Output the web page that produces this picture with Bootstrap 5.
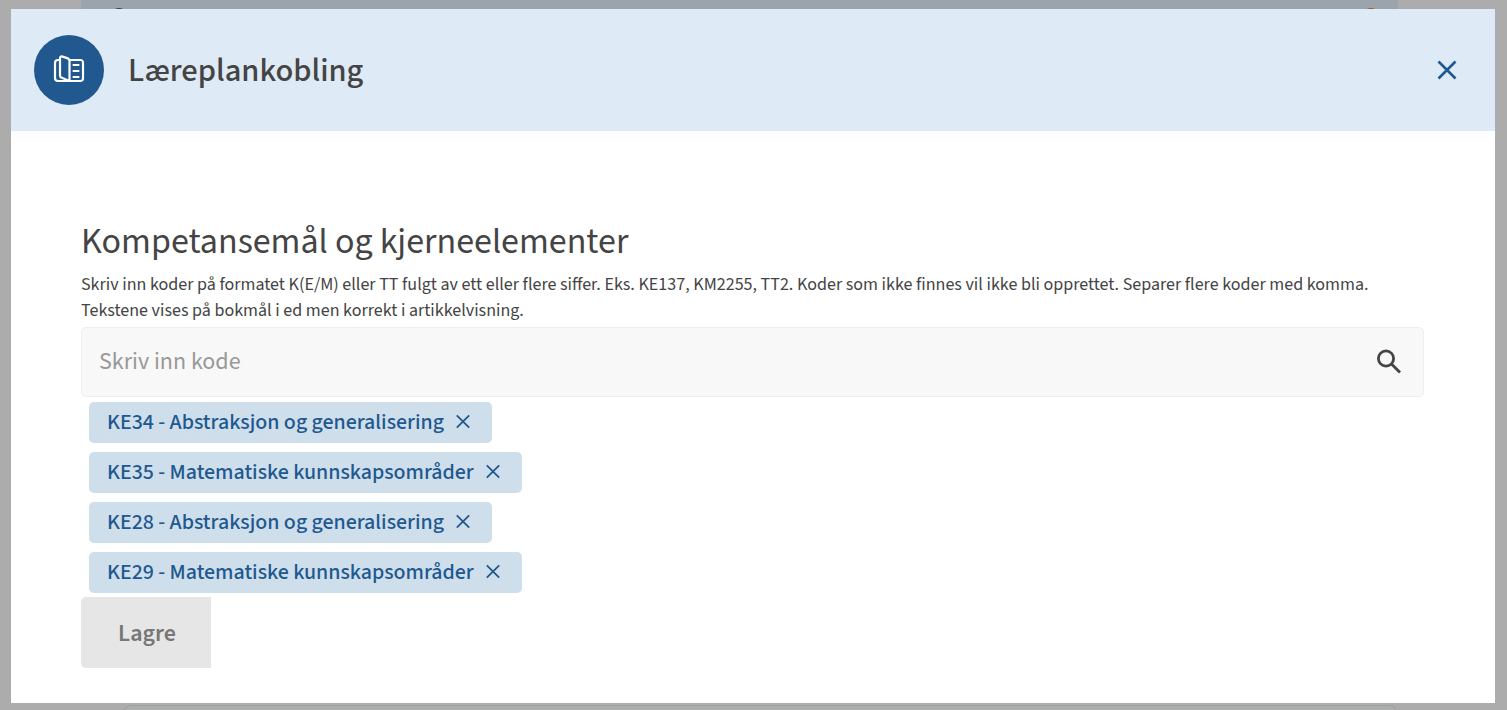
<!DOCTYPE html>
<html lang="nb">
<head>
<meta charset="utf-8">
<meta name="viewport" content="width=device-width, initial-scale=1">
<title>Læreplankobling</title>
<link href="https://cdn.jsdelivr.net/npm/bootstrap@5.3.0/dist/css/bootstrap.min.css" rel="stylesheet">
<style>
  :root { --brand: #20588f; --ink: #444444; }
  body { font-family: "Source Sans Pro", "Source Sans 3", "Noto Sans CJK SC", sans-serif; color: var(--ink); background: #acacac; }
  .page-behind { padding: 0 109px 0 81px; }
  .band { background: #9ba3ac; height: 24px; padding: 0 19px 0 30px; }
  .band-dot { width: 16px; height: 16px; margin-top: 8px; background: #154577; }
  .band-dot-warm { background: #a55a12; }
  .field-outline { margin-left: 42px; height: 24px; margin-top: 681px; border: 1px solid #98a3a9; border-radius: 8px; }
  .dialog-layer { padding: 9px 12px 7px 11px; }
  .dialog-head { background: #deeaf6; padding: 26px 23px 26px 23px; gap: 24px; }
  .head-icon { width: 70px; height: 70px; background: var(--brand); }
  .head-title { font-family: "Noto Sans CJK SC", sans-serif; font-size: 29px; line-height: 40px; font-weight: 500; padding-bottom: 4px; }
  .plain-btn { border: 0; background: none; padding: 0; color: var(--brand); display: flex; }
  .dialog-main { padding: 89px 71px 35px 70px; }
  .main-title { font-size: 36px; line-height: 44px; font-weight: 400; margin-bottom: 8px; }
  .help { font-size: 18px; line-height: 26px; margin-bottom: 3px; }
  .search-box { background: #f8f8f8; border: 1px solid #eeeeee; border-radius: 5px; height: 70px; padding: 0 20px 0 17px; margin-bottom: 5px; }
  .search-box input { font-size: 24px; line-height: 40px; height: 40px; border: 0; background: none; outline: 0; padding: 0; color: var(--ink); min-width: 0; }
  .search-box input::placeholder { color: #999999; opacity: 1; }
  .search-box .plain-btn { color: var(--ink); }
  .code-tags { gap: 9px; padding-left: 8px; margin-bottom: 4px; }
  .code-tag { background: #cedeeb; color: var(--brand); border-radius: 5px; height: 41px; padding: 0 18px 1px; gap: 8px; font-size: 22px; font-weight: 500; line-height: 40px; }
  .save-btn { width: 130px; height: 71px; border: 0; border-radius: 5px 0 0 5px; background: #e6e6e6; color: #777777; font-size: 24px; font-weight: 600; padding: 2px 0 0 2px; }
</style>
</head>
<body class="overflow-hidden">
<div class="page-behind position-absolute top-0 start-0 w-100 vh-100 overflow-hidden" aria-hidden="true">
  <div class="band d-flex justify-content-between">
    <span class="band-dot rounded-circle"></span>
    <span class="band-dot band-dot-warm rounded-circle"></span>
  </div>
  <div class="field-outline"></div>
</div>

<div class="dialog-layer position-relative d-flex flex-column min-vh-100">
  <section class="bg-white flex-grow-1" role="dialog" aria-labelledby="dialogTitle">
    <header class="dialog-head d-flex align-items-center">
      <span class="head-icon rounded-circle d-flex align-items-center justify-content-center flex-shrink-0">
        <svg width="32" height="30" viewBox="0 0 32 30" fill="none" stroke="#fff" stroke-width="2.200" stroke-linejoin="round" stroke-linecap="round" aria-hidden="true">
          <path d="M7 5H5A3 3 0 0 0 2 8V23A3 3 0 0 0 5 26H27.500A2.500 2.500 0 0 0 30 23.500V7.500A2.500 2.500 0 0 0 27.500 5H16.500"/>
          <path d="M7 3.500C7 1.700 8 1.200 9.500 1.600L15 3.400C16 3.800 16.500 4.400 16.500 5.400V26L8.800 22.800C7.500 22.300 7 21.700 7 20.500Z"/>
          <path d="M20.500 10H25.500M20.500 16H25.500M20.500 22H25.500"/>
        </svg>
      </span>
      <h1 class="head-title mb-0 flex-grow-1" id="dialogTitle">Læreplankobling</h1>
      <button class="plain-btn me-2 pe-1" type="button" aria-label="Lukk">
        <svg width="26" height="26" viewBox="0 0 26 26" stroke="currentColor" stroke-width="2.600" aria-hidden="true"><path d="M4.500 4.500L21.500 21.500M21.500 4.500L4.500 21.500"/></svg>
      </button>
    </header>

    <form class="dialog-main">
      <h2 class="main-title">Kompetansemål og kjerneelementer</h2>
      <p class="help" id="codeHelp">Skriv inn koder på formatet K(E/M) eller TT fulgt av ett eller flere siffer. Eks. KE137, KM2255, TT2. Koder som ikke finnes vil ikke bli opprettet. Separer flere koder med komma. Tekstene vises på bokmål i ed men korrekt i artikkelvisning.</p>
      <div class="search-box d-flex align-items-center">
        <input class="flex-grow-1" id="code" type="text" placeholder="Skriv inn kode" aria-label="Skriv inn kode" aria-describedby="codeHelp">
        <button class="plain-btn" type="button" aria-label="Søk">
          <svg width="28" height="28" viewBox="0 0 28 28" fill="none" stroke="currentColor" stroke-width="2.800" aria-hidden="true"><circle cx="11" cy="10.500" r="7.600"/><path d="M16.500 16L25 24.500"/></svg>
        </button>
      </div>
      <div class="code-tags d-flex flex-column align-items-start">
        <span class="code-tag d-flex align-items-center">KE34 - Abstraksjon og generalisering
          <button class="plain-btn" type="button" aria-label="Fjern KE34"><svg width="22" height="22" viewBox="0 0 22 22" stroke="currentColor" stroke-width="1.800"><path d="M4.800 4.300L17.200 16.700M17.200 4.300L4.800 16.700"/></svg></button></span>
        <span class="code-tag d-flex align-items-center">KE35 - Matematiske kunnskapsområder
          <button class="plain-btn" type="button" aria-label="Fjern KE35"><svg width="22" height="22" viewBox="0 0 22 22" stroke="currentColor" stroke-width="1.800"><path d="M4.800 4.300L17.200 16.700M17.200 4.300L4.800 16.700"/></svg></button></span>
        <span class="code-tag d-flex align-items-center">KE28 - Abstraksjon og generalisering
          <button class="plain-btn" type="button" aria-label="Fjern KE28"><svg width="22" height="22" viewBox="0 0 22 22" stroke="currentColor" stroke-width="1.800"><path d="M4.800 4.300L17.200 16.700M17.200 4.300L4.800 16.700"/></svg></button></span>
        <span class="code-tag d-flex align-items-center">KE29 - Matematiske kunnskapsområder
          <button class="plain-btn" type="button" aria-label="Fjern KE29"><svg width="22" height="22" viewBox="0 0 22 22" stroke="currentColor" stroke-width="1.800"><path d="M4.800 4.300L17.200 16.700M17.200 4.300L4.800 16.700"/></svg></button></span>
      </div>
      <button class="save-btn d-block" type="submit" disabled>Lagre</button>
    </form>
  </section>
</div>
<script src="https://cdn.jsdelivr.net/npm/bootstrap@5.3.0/dist/js/bootstrap.bundle.min.js"></script>
</body>
</html>
